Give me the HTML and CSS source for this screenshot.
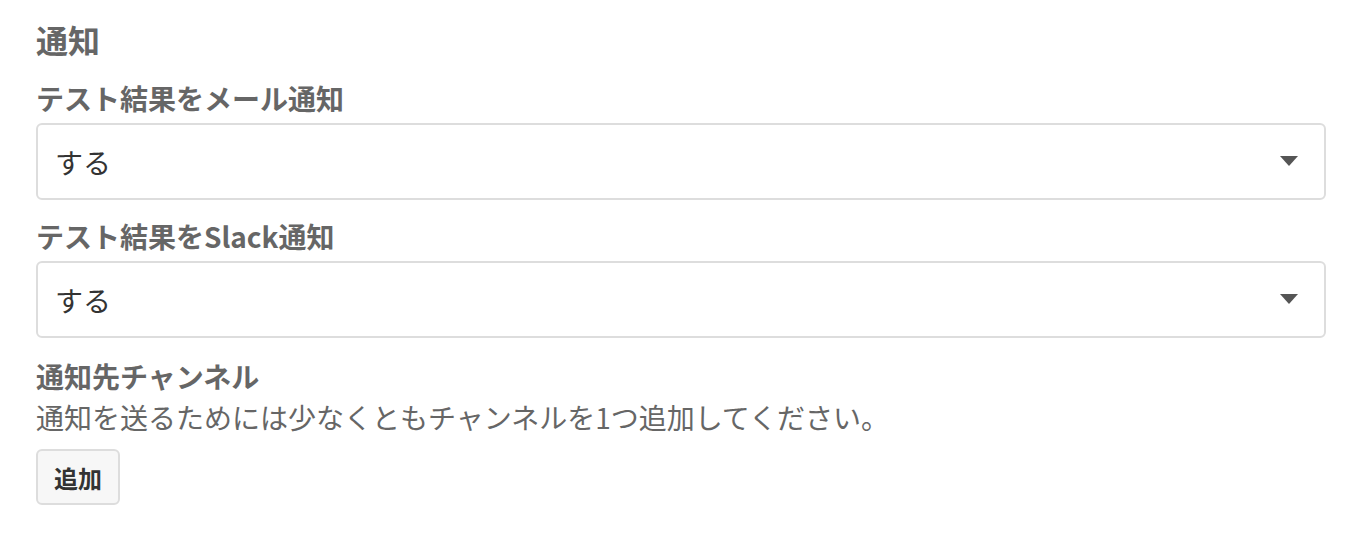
FILE: index.html
```html
<!DOCTYPE html>
<html lang="ja">
<head>
  <meta charset="UTF-8" />
  <meta name="viewport" content="width=device-width, initial-scale=1.0" />
  <title>通知設定</title>
  <link rel="stylesheet" href="styles.css">
</head>
<body>
  <!-- Notification settings -->
  <div class="settings">
    <h2 class="section-title">通知</h2>

    <div class="field">
      <label class="field-label" for="mailNotify">テスト結果をメール通知</label>
      <div class="select-wrap">
        <select id="mailNotify" class="select">
          <option>する</option>
          <option>しない</option>
        </select>
        <svg class="select-arrow" width="18" height="10" viewBox="0 0 18 10"><path d="M0 0h18L9 10z" fill="#555"/></svg>
      </div>
    </div>

    <div class="field">
      <label class="field-label" for="slackNotify">テスト結果をSlack通知</label>
      <div class="select-wrap">
        <select id="slackNotify" class="select">
          <option>する</option>
          <option>しない</option>
        </select>
        <svg class="select-arrow" width="18" height="10" viewBox="0 0 18 10"><path d="M0 0h18L9 10z" fill="#555"/></svg>
      </div>
    </div>

    <div class="field field-channel">
      <div class="field-label field-label-tight">通知先チャンネル</div>
      <p class="help">通知を送るためには少なくともチャンネルを1つ追加してください。</p>
      <button class="btn">追加</button>
    </div>
  </div>
</body>
</html>
```

FILE: styles.css
```css
/* General */
body {
  margin: 0;
  background: #fff;
  font-family: "Noto Sans CJK JP", "Noto Sans", sans-serif;
  color: #666;
}
.settings {
  padding: 19px 30px 20px 36px;
}
.section-title {
  margin: 0;
  font-size: 32px;
  line-height: 40px;
  font-weight: bold;
  color: #666;
}
/* Fields */
.field {
  margin-top: 21px;
}
.field + .field {
  margin-top: 18px;
}
.field.field-channel {
  margin-top: 20px;
}
.field-label {
  display: block;
  font-size: 28px;
  line-height: 36px;
  font-weight: bold;
  color: #666;
  margin-bottom: 7px;
}
.field-label-tight {
  margin-bottom: 5px;
}
.select-wrap {
  position: relative;
}
.select {
  display: block;
  width: 100%;
  height: 77px;
  box-sizing: border-box;
  padding: 0 60px 0 17px;
  border: 2px solid #ddd;
  border-radius: 6px;
  background: #fff;
  font-family: inherit;
  font-size: 28px;
  color: #333;
  appearance: none;
  -webkit-appearance: none;
}
.select-arrow {
  position: absolute;
  right: 28px;
  top: 33px;
  pointer-events: none;
}
.help {
  margin: 0;
  font-size: 28px;
  line-height: 36px;
  color: #666;
}
.btn {
  margin-top: 14px;
  padding: 0 16px;
  height: 56px;
  border: 2px solid #ddd;
  border-radius: 6px;
  background: #f7f7f7;
  font-family: inherit;
  font-size: 24px;
  font-weight: bold;
  color: #333;
  cursor: pointer;
}
```
